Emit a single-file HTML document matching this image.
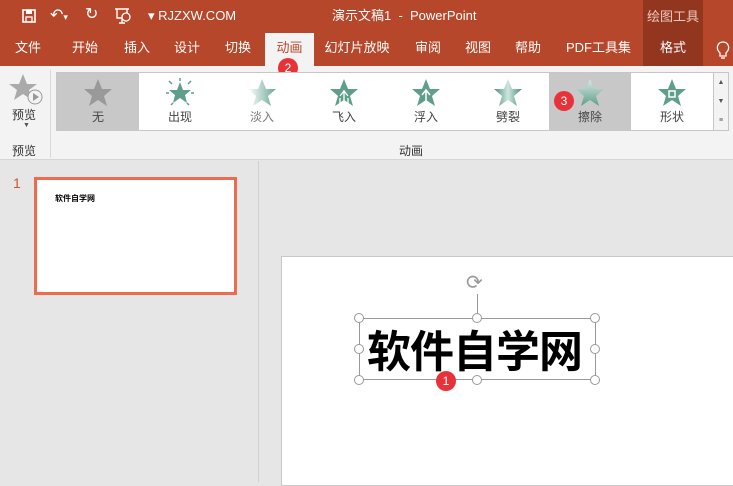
<!DOCTYPE html>
<html><head><meta charset="utf-8"><style>
*{margin:0;padding:0;box-sizing:border-box}
body{width:733px;height:482px;overflow:hidden;background:#e6e6e6;font-family:"Liberation Sans","Noto Sans CJK SC",sans-serif;position:relative}
.a{position:absolute}
.title{left:0;top:0;width:733px;height:66px;background:#b7472a;color:#fff}
.tab{top:33px;height:33px;line-height:30px;font-size:13px;color:#fff;text-align:center}
.rib{left:0;top:66px;width:733px;height:94px;background:#f3f3f3;border-bottom:1px solid #d5d5d5}
.gal{left:56px;top:72px;width:658px;height:59px;background:#fff;border:1px solid #c6c6c6}
.it{top:0;width:82px;height:57px;text-align:center;font-size:12px;color:#444}
.it svg{display:block;margin:5px auto 0}
.it span{display:block;margin-top:0px}
.badge{width:20px;height:20px;border-radius:50%;background:#e8323a;color:#fff;font-size:12px;text-align:center;line-height:20px}
.h{width:10px;height:10px;border:1.5px solid #999;border-radius:50%;background:#fff}
</style></head><body>
<div class="a title">
 <svg class="a" style="left:22px;top:9px" width="14" height="14" viewBox="0 0 14 14"><rect x="1" y="1" width="12" height="12" fill="none" stroke="#fff" stroke-width="1.6"/><rect x="4" y="1" width="6" height="4" fill="#fff"/><rect x="4" y="8" width="6" height="5" fill="none" stroke="#fff" stroke-width="1.3"/></svg>
 <div class="a" style="left:50px;top:5px;font-size:16px">↶<span style="font-size:9px">▾</span></div>
 <div class="a" style="left:85px;top:4px;font-size:16px">↻</div>
 <svg class="a" style="left:114px;top:8px" width="18" height="16" viewBox="0 0 18 16"><path d="M1 1h14M3 1v9h10V1M8 10v5M5 15h6" stroke="#fff" fill="none" stroke-width="1.4"/><circle cx="12" cy="9" r="4" fill="#b7472a" stroke="#fff" stroke-width="1.3"/></svg>
 <div class="a" style="left:148px;top:8px;font-size:13px">▾ RJZXW.COM</div>
 <div class="a" style="left:332px;top:5px;font-size:13px">演示文稿1 &nbsp;- &nbsp;PowerPoint</div>
 <div class="a" style="left:643px;top:0;width:60px;height:66px;background:#93361f"></div>
 <div class="a" style="left:643px;top:6px;width:60px;text-align:center;font-size:13px;color:#f0c8bc">绘图工具</div>
</div>
<div class="a tab" style="left:3px;width:50px">文件</div>
<div class="a tab" style="left:60px;width:50px">开始</div>
<div class="a tab" style="left:112px;width:50px">插入</div>
<div class="a tab" style="left:162px;width:50px">设计</div>
<div class="a tab" style="left:213px;width:50px">切换</div>
<div class="a tab" style="left:265px;width:49px;background:#f3f3f3;color:#b7472a">动画</div>
<div class="a tab" style="left:322px;width:70px">幻灯片放映</div>
<div class="a tab" style="left:403px;width:50px">审阅</div>
<div class="a tab" style="left:453px;width:50px">视图</div>
<div class="a tab" style="left:503px;width:50px">帮助</div>
<div class="a tab" style="left:561px;width:75px">PDF工具集</div>
<div class="a tab" style="left:643px;width:60px">格式</div>
<svg class="a" style="left:716px;top:41px" width="14" height="18" viewBox="0 0 14 18"><path d="M4 12C1 9 1 6 2 4 4 0 10 0 12 4 13 6 13 9 10 12V15H4Z" fill="none" stroke="#fff" stroke-width="1.3"/><path d="M5 17h4" stroke="#fff" stroke-width="1.3"/></svg>
<div class="a rib"></div>
<div class="a badge" style="left:278px;top:58px">2</div>
<svg class="a" style="left:8px;top:72px" width="36" height="34" viewBox="0 0 36 34"><polygon points="15,2 19,12 29,12 21,18 24,28 15,22 6,28 9,18 1,12 11,12" fill="#aaa"/><circle cx="27" cy="25" r="7" fill="#f3f3f3" stroke="#999"/><polygon points="25,21 31,25 25,29" fill="#999"/></svg>
<div class="a" style="left:12px;top:106px;font-size:12px;color:#333">预览</div>
<div class="a" style="left:23px;top:122px;font-size:7px;color:#555">▼</div>
<div class="a" style="left:12px;top:142px;font-size:12px;color:#333">预览</div>
<div class="a" style="left:50px;top:70px;width:1px;height:88px;background:#d8d8d8"></div>
<div class="a gal">
 <div class="a it" style="left:0;background:#c8c8c8"><svg width="30" height="30" viewBox="0 0 30 30"><polygon points="15,1 19,11 29,11 21,18 24,28 15,22 6,28 9,18 1,11 11,11" fill="#999"/></svg><span>无</span></div>
 <div class="a it" style="left:82px"><svg width="30" height="30" viewBox="0 0 30 30"><polygon points="15,4 18,12 26,12 20,17 22,25 15,20 8,25 10,17 4,12 12,12" fill="#5f9e8b"/><path d="M15 0v3M4 3l3 3M26 3l-3 3M1 15h3M29 15h-3M6 27l2-2M24 27l-2-2" stroke="#5f9e8b" stroke-width="1.5"/></svg><span>出现</span></div>
 <div class="a it" style="left:164px;color:#777"><svg width="30" height="30" viewBox="0 0 30 30"><defs><linearGradient id="f" x1="0" x2="1"><stop offset="0" stop-color="#fff"/><stop offset="1" stop-color="#6aa694"/></linearGradient></defs><polygon points="15,1 19,11 29,11 21,18 24,28 15,22 6,28 9,18 1,11 11,11" fill="url(#f)"/></svg><span>淡入</span></div>
 <div class="a it" style="left:246px"><svg width="30" height="30" viewBox="0 0 30 30"><polygon points="15,1 19,11 29,11 21,18 24,28 15,22 6,28 9,18 1,11 11,11" fill="#5f9e8b"/><path d="M15 12v16M11 18l4-5 4 5M11 20v8M19 20v8" stroke="#fff" stroke-width="1.3" fill="none"/></svg><span>飞入</span></div>
 <div class="a it" style="left:328px"><svg width="30" height="30" viewBox="0 0 30 30"><polygon points="15,1 19,11 29,11 21,18 24,28 15,22 6,28 9,18 1,11 11,11" fill="#5f9e8b"/><path d="M15 12v12M11 17l4-5 4 5" stroke="#fff" stroke-width="1.5" fill="none"/></svg><span>浮入</span></div>
 <div class="a it" style="left:410px"><svg width="30" height="30" viewBox="0 0 30 30"><defs><linearGradient id="s" x1="0" x2="1"><stop offset="0" stop-color="#4e8d7a"/><stop offset=".5" stop-color="#cfe6de"/><stop offset="1" stop-color="#4e8d7a"/></linearGradient></defs><polygon points="15,1 19,11 29,11 21,18 24,28 15,22 6,28 9,18 1,11 11,11" fill="url(#s)"/></svg><span>劈裂</span></div>
 <div class="a it" style="left:492px;background:#c8c8c8"><svg width="30" height="30" viewBox="0 0 30 30"><defs><linearGradient id="w" x1="0" y1="0" x2="0" y2="1"><stop offset="0" stop-color="#d6ebe4"/><stop offset="1" stop-color="#5f9e8b"/></linearGradient></defs><polygon points="15,1 19,11 29,11 21,18 24,28 15,22 6,28 9,18 1,11 11,11" fill="url(#w)"/></svg><span>擦除</span></div>
 <div class="a it" style="left:574px"><svg width="30" height="30" viewBox="0 0 30 30"><polygon points="15,1 19,11 29,11 21,18 24,28 15,22 6,28 9,18 1,11 11,11" fill="#5f9e8b"/><rect x="12" y="13" width="6" height="6" fill="none" stroke="#fff" stroke-width="1.5"/></svg><span>形状</span></div>
</div>
<div class="a" style="left:713px;top:72px;width:16px;height:59px;background:#f3f3f3;border:1px solid #c6c6c6;font-size:7px;color:#555;text-align:center;line-height:19px">▲<br>▼<br>≡</div>
<div class="a badge" style="left:554px;top:91px">3</div>
<div class="a" style="left:399px;top:142px;font-size:12px;color:#333">动画</div>
<div class="a" style="left:258px;top:161px;width:1px;height:321px;background:#d0d0d0"></div>
<div class="a" style="left:13px;top:175px;font-size:14px;color:#d35230">1</div>
<div class="a" style="left:34px;top:177px;width:203px;height:118px;border:3px solid #ed6c4f;background:#fff"></div>
<div class="a" style="left:55px;top:193px;font-size:8px;font-weight:bold;color:#000">软件自学网</div>
<div class="a" style="left:281px;top:256px;width:460px;height:230px;background:#fff;border:1px solid #c8c8c8"></div>
<div class="a" style="left:477px;top:294px;width:1px;height:24px;background:#999"></div>
<div class="a" style="left:466px;top:270px;font-size:20px;color:#999">⟳</div>
<div class="a" style="left:359px;top:318px;width:237px;height:62px;border:1px solid #999"></div>
<div class="a" style="left:367px;top:318px;font-size:44px;font-weight:bold;color:#000;line-height:60px;font-family:'Noto Sans CJK SC',sans-serif;letter-spacing:-1px">软件自学网</div>
<div class="a h" style="left:354px;top:313px"></div><div class="a h" style="left:472px;top:313px"></div><div class="a h" style="left:590px;top:313px"></div>
<div class="a h" style="left:354px;top:344px"></div><div class="a h" style="left:590px;top:344px"></div>
<div class="a h" style="left:354px;top:375px"></div><div class="a h" style="left:472px;top:375px"></div><div class="a h" style="left:590px;top:375px"></div>
<div class="a badge" style="left:436px;top:371px">1</div>
</body></html>
